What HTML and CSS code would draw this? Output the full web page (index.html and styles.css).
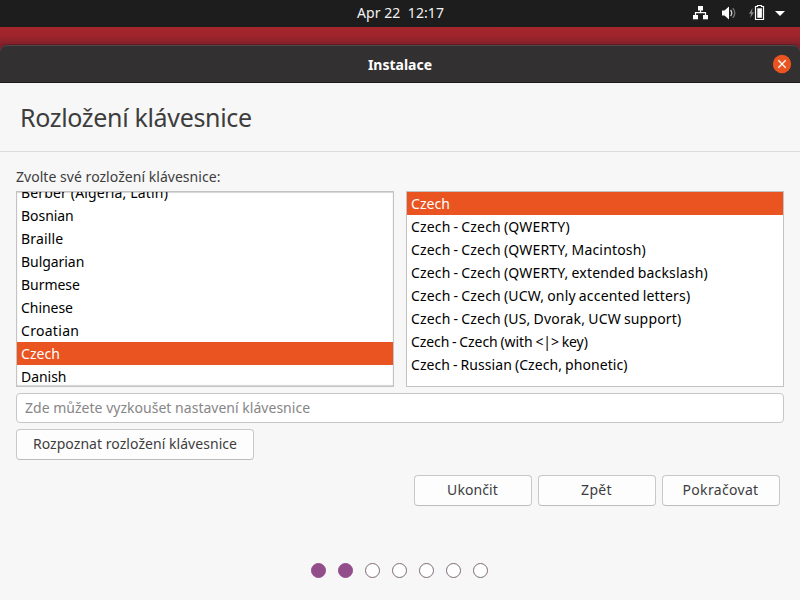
FILE: index.html
```html
<!DOCTYPE html>
<html lang="cs">
<head>
<meta charset="utf-8">
<title>Instalace</title>
<link rel="stylesheet" href="styles.css">
</head>
<body>
<header class="topbar">
  <span></span>
  <span class="clock">Apr 22  12:17</span>
  <svg class="tray" width="94" height="27" viewBox="0 0 94 27">
    <g fill="#fff">
      <rect x="5" y="6" width="5" height="4.500"/>
      <rect x="0" y="15" width="5" height="4.300"/>
      <rect x="10" y="15" width="5" height="4.300"/>
      <path d="M29 10.500h2.500L36 6.400v13.200l-4.500-4.100H29z"/>
      <path d="M82 11h10l-5 5z"/>
      <rect x="64.300" y="8.300" width="4.600" height="9.500"/>
    </g>
    <path d="M7.500 10v2.700M2.500 15.500v-2.800h10v2.800" fill="none" stroke="#fff" stroke-width="1.200"/>
    <path d="M37.600 10q2.300 3 0 6" fill="none" stroke="#d5d5d5" stroke-width="1.300"/>
    <path d="M39.800 8.200q4 4.800 0 9.600" fill="none" stroke="#77767b" stroke-width="1.300"/>
    <path d="M59.500 8L56 13.700h2L57.300 18l3.700-5.700h-2z" fill="#8a898f"/>
    <path d="M64.500 6.500v-1h4v1h2v13h-8v-13z" fill="none" stroke="#fff" stroke-width="1.200"/>
  </svg>
</header>
<main class="window">
  <div class="titlebar">
    <span></span>
    <span class="title">Instalace</span>
    <svg class="close" width="20" height="20" viewBox="0 0 20 20">
      <circle cx="10" cy="10" r="9.200" fill="#e95420"/>
      <path d="M6.300 6.300l7.400 7.400M13.700 6.300l-7.400 7.400" stroke="#fff" stroke-width="1.300"/>
    </svg>
  </div>
  <h1 class="heading">Rozložení klávesnice</h1>
  <section class="content">
    <p class="label">Zvolte své rozložení klávesnice:</p>
    <div class="lists">
      <ul class="list scrolled">
        <li class="wide">Berber (Algeria, Latin)</li>
        <li class="tight">Bosnian</li>
        <li class="wide">Braille</li>
        <li class="tight">Bulgarian</li>
        <li class="tight">Burmese</li>
        <li class="tight">Chinese</li>
        <li class="wider">Croatian</li>
        <li class="selected">Czech</li>
        <li class="tight">Danish</li>
      </ul>
      <ul class="list">
        <li class="selected">Czech</li>
        <li class="variant">Czech - Czech (QWERTY)</li>
        <li class="variant">Czech - Czech (QWERTY, Macintosh)</li>
        <li class="variant">Czech - Czech (QWERTY, extended backslash)</li>
        <li class="variant">Czech - Czech (UCW, only accented letters)</li>
        <li class="variant">Czech - Czech (US, Dvorak, UCW support)</li>
        <li class="variant tighter">Czech - Czech (with &lt;|&gt; key)</li>
        <li class="variant close-set">Czech - Russian (Czech, phonetic)</li>
      </ul>
    </div>
    <input class="entry" type="text" placeholder="Zde můžete vyzkoušet nastavení klávesnice">
    <button class="button detect">Rozpoznat rozložení klávesnice</button>
    <div class="actions">
      <button class="button">Ukončit</button>
      <button class="button wider">Zpět</button>
      <button class="button wider">Pokračovat</button>
    </div>
  </section>
  <div class="dots">
    <i class="dot done"></i><i class="dot done"></i><i class="dot"></i><i class="dot"></i><i class="dot"></i><i class="dot"></i><i class="dot"></i>
  </div>
</main>
</body>
</html>
```
FILE: styles.css
```css
* { box-sizing: border-box; }

body {
  margin: 0;
  height: 600px;
  overflow: hidden;
  display: flex;
  flex-direction: column;
  background: linear-gradient(#a5262d 27px, #9f242c 36px, #80202a 45px, #80202a 50px, #f7f7f7 90px);
  font: 14px/23px "Noto Sans", "Open Sans", sans-serif;
  letter-spacing: 0.07px;
  color: #3d3d3d;
}

.topbar {
  height: 27px;
  margin-bottom: 18px;
  padding: 0 13px 0 14px;
  display: grid;
  grid-template-columns: 1fr auto 1fr;
  align-items: center;
  background: #1d1d1d;
  color: #f2f2f2;
}

.clock { white-space: pre; padding-bottom: 3px; }

.tray { justify-self: end; }

.window {
  flex: 1;
  display: flex;
  flex-direction: column;
  background: #f7f7f7;
  border-radius: 7px 7px 0 0;
}

.titlebar {
  height: 38px;
  padding: 0 8px;
  display: grid;
  grid-template-columns: 1fr auto 1fr;
  align-items: center;
  background: #333031;
  border-top: 1px solid #4b4949;
  border-bottom: 1px solid #1c1a1b;
  border-radius: 7px 7px 0 0;
  box-shadow: 0 -1px 0 #641a21;
  color: #fff;
}

.title { font-weight: 700; letter-spacing: 0; }

.close { justify-self: end; }

.heading {
  margin: 0;
  height: 69px;
  padding-left: 20px;
  border-bottom: 1px solid #dcdcdc;
  font-size: 25px;
  font-weight: 400;
  line-height: 69px;
  letter-spacing: -0.33px;
}

.content {
  padding: 13px 16px 0;
  display: flex;
  flex-direction: column;
}

.label { margin: 0 0 3px; letter-spacing: 0.04px; }

.lists {
  display: grid;
  grid-template-columns: 378px 378px;
  gap: 12px;
  margin-bottom: 6px;
}

.list {
  margin: 0;
  padding: 0;
  height: 196px;
  overflow: hidden;
  list-style: none;
  background: #fff;
  border: 1px solid #c3c3c3;
  color: #000;
}

.list li { padding-left: 4px; height: 23px; }

.scrolled { box-shadow: inset 0 1px 1px #d5d5d5, inset 0 -1px 1px #d5d5d5; }

.scrolled li:first-child { margin-top: -11px; }

.list .selected { background: #e95420; color: #fff; }

.variant { letter-spacing: 0.18px; word-spacing: -0.8px; }
.tight { letter-spacing: -0.05px; }
.tighter { letter-spacing: -0.07px; }
.close-set { letter-spacing: 0.08px; }
.wide { letter-spacing: 0.16px; }
.wider { letter-spacing: 0.3px; }

.entry {
  height: 30px;
  margin-bottom: 6px;
  padding: 0 8px 2px;
  border: 1px solid #c6c6c6;
  border-radius: 4px;
  background: #fff;
  font: inherit;
  letter-spacing: 0.02px;
}

.entry::placeholder { color: #868686; }

.button {
  width: 118px;
  height: 31px;
  padding: 0 1px 3px 0;
  border: 1px solid #c8c8c8;
  border-bottom-color: #bdbdbd;
  border-radius: 4px;
  background: #fdfdfd;
  font: inherit;
  letter-spacing: 0.09px;
  color: inherit;
}

.button.wider { letter-spacing: 0.33px; }

.button.detect { width: 238px; padding-right: 0; letter-spacing: 0.05px; }

.actions {
  display: flex;
  justify-content: flex-end;
  gap: 6px;
  margin: 15px 4px 0 0;
}

.dots {
  display: flex;
  gap: 12px;
  margin: 57px 0 0 311px;
}

.dot {
  width: 15px;
  height: 15px;
  border: 1px solid #7d6a78;
  border-radius: 50%;
  background: #fff;
}

.done { border-color: #924d8b; background: #924d8b; }
```
